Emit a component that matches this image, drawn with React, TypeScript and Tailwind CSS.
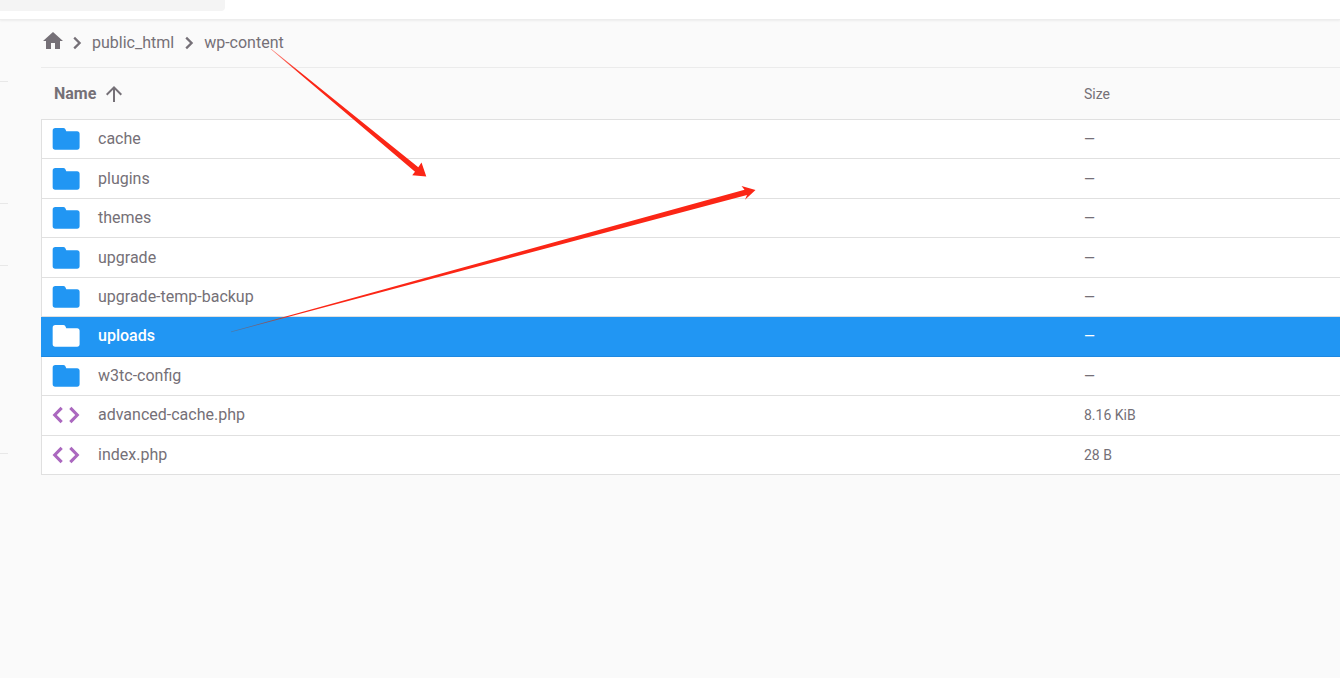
type Entry = { name: string; size: string; kind: "folder" | "code"; selected?: boolean };

const entries: Entry[] = [
  { name: "cache", size: "—", kind: "folder" },
  { name: "plugins", size: "—", kind: "folder" },
  { name: "themes", size: "—", kind: "folder" },
  { name: "upgrade", size: "—", kind: "folder" },
  { name: "upgrade-temp-backup", size: "—", kind: "folder" },
  { name: "uploads", size: "—", kind: "folder", selected: true },
  { name: "w3tc-config", size: "—", kind: "folder" },
  { name: "advanced-cache.php", size: "8.16 KiB", kind: "code" },
  { name: "index.php", size: "28 B", kind: "code" },
];

function Glyph({ d, className }: { d: string; className: string }) {
  return (
    <svg viewBox="0 0 24 24" className={`block shrink-0 ${className}`} fill="currentColor" aria-hidden="true">
      <path d={d} />
    </svg>
  );
}

const HOME = "M10 20v-6h4v6h5v-8h3L12 3 2 12h3v8z";
const CHEVRON = "M10 5.800 8.400 7.400 13 12l-4.600 4.600L10 18.200l6.200-6.200z";
const ARROW_UP = "m4 12 1.41 1.41L11 7.83V20h2V7.83l5.58 5.59L20 12l-8-8-8 8z";
const FOLDER =
  "M10 3.800H4C2.700 3.800 2 4.500 2 5.800v12.400c0 1.200.7 1.800 1.900 1.800h16.400c1.200 0 1.900-.6 1.900-1.800V8c0-1.200-.7-1.900-1.900-1.900H12.200C11.500 4.600 11.200 3.800 10 3.800z";
const CODE =
  "M9.600 16.500 5.100 12l4.500-4.500L7.900 5.900 1.900 12l6 6.100zm4.800 0 4.500-4.500-4.500-4.500 1.700-1.600 6 6.100-6 6.100z";

function Row({ entry }: { entry: Entry }) {
  const { name, size, kind, selected } = entry;
  const edge = selected ? "border-b-[#1e88e0]" : "border-b-[#e0e0e0]";
  return (
    <tr className={selected ? "bg-[#2196f3] text-white" : "bg-white"}>
      <td className={`border-b border-l p-0 pl-2 align-middle ${edge} ${selected ? "border-l-[#2196f3]" : "border-l-[#e0e0e0]"}`}>
        <div className="flex items-center gap-4">
          <Glyph
            d={kind === "folder" ? FOLDER : CODE}
            className={`size-8 ${selected ? "text-white" : kind === "folder" ? "text-[#2196f3]" : "text-[#ab68bf]"}`}
          />
          <span className={`text-base leading-5 ${selected ? "font-medium" : ""}`}>{name}</span>
        </div>
      </td>
      <td className={`border-b p-0 align-middle text-sm leading-5 ${edge}`}>{size}</td>
    </tr>
  );
}

function Arrows() {
  return (
    <svg className="pointer-events-none absolute left-0 top-0 h-[678px] w-[1340px]" viewBox="0 0 1340 678" aria-hidden="true">
      <defs>
        <linearGradient id="fadeDown" gradientUnits="userSpaceOnUse" x1="271" y1="49" x2="300" y2="73">
          <stop offset="0" stopColor="#fb2616" stopOpacity="0.5" />
          <stop offset="1" stopColor="#fb2616" />
        </linearGradient>
        <linearGradient id="fadeUp" gradientUnits="userSpaceOnUse" x1="231" y1="332" x2="300" y2="314">
          <stop offset="0" stopColor="#80504a" stopOpacity="0.4" />
          <stop offset="0.72" stopColor="#a04c48" />
          <stop offset="0.82" stopColor="#fb2616" />
        </linearGradient>
      </defs>
      <path d="M270.800 49.200 415 171.700 412.200 175.200 426.300 176.500 421.500 162.500 418.300 167.200 271.200 48.800Z" fill="url(#fadeDown)" />
      <path d="M231 332.200 747 194.900 745 199.800 755.500 190 741.500 186 744.500 189.800 231 331.600Z" fill="url(#fadeUp)" />
    </svg>
  );
}

export default function App() {
  return (
    <div className="relative flex min-h-screen flex-col overflow-hidden bg-[#fafafa] font-['Roboto',sans-serif] text-[#757077]">
      <header className="h-5 border-b border-[#ededed] bg-white shadow-[0_1px_2px_rgba(0,0,0,0.06)]">
        <div className="h-[11px] w-[225px] rounded-br bg-[#f4f4f4]" />
      </header>

      <div className="flex flex-1">
        <aside className="mr-[33px] w-2 shrink-0">
          <div className="h-[62px] border-b border-[#e8e8e8]" />
          <div className="h-[122px] border-b border-[#e8e8e8]" />
          <div className="h-[62px] border-b border-[#e8e8e8]" />
          <div className="h-[188px] border-b border-[#e8e8e8]" />
        </aside>

        <main className="min-w-0 flex-1">
          <nav aria-label="Breadcrumb" className="flex h-12 items-center border-b border-[#ebebeb] pb-0.5 text-base leading-5">
            <a href="#home" aria-label="Home">
              <Glyph d={HOME} className="mb-1 size-6" />
            </a>
            <Glyph d={CHEVRON} className="mr-[3px] size-6" />
            <a href="#public_html">public_html</a>
            <Glyph d={CHEVRON} className="mx-[3px] size-6" />
            <a href="#wp-content">wp-content</a>
          </nav>

          <table className="h-[407px] w-full table-fixed border-separate border-spacing-0 text-left">
            <thead>
              <tr className="h-[52px]">
                <th scope="col" className="border-b border-[#e0e0e0] p-0 pl-[13px] align-middle">
                  <button type="button" className="flex items-center gap-1.5 text-base font-bold leading-5">
                    Name
                    <Glyph d={ARROW_UP} className="size-6" />
                  </button>
                </th>
                <th scope="col" className="w-64 border-b border-[#e0e0e0] p-0 align-middle text-sm font-normal leading-5">
                  Size
                </th>
              </tr>
            </thead>
            <tbody>
              {entries.map((entry) => (
                <Row key={entry.name} entry={entry} />
              ))}
            </tbody>
          </table>
        </main>
      </div>
      <Arrows />
    </div>
  );
}
